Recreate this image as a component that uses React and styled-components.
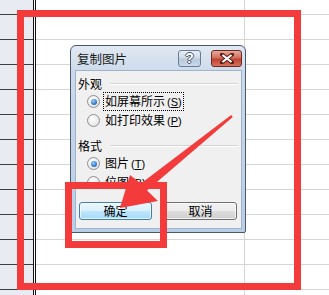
import styled, { createGlobalStyle } from "styled-components";

const GlobalStyle = createGlobalStyle`
  html, body { margin: 0; padding: 0; background: #fff; }
  body { font-family: "Noto Sans CJK SC", "Liberation Sans", sans-serif; }
`;

const Page = styled.div`
  position: relative;
  width: 329px;
  height: 295px;
  overflow: hidden;
  background: #fff;
`;

const Sheet = styled.div`
  display: flex;
  flex-direction: column;
`;

const Row = styled.div`
  display: flex;
  flex: none;
  height: ${(p) => p.$h}px;
`;

const RowHead = styled.div`
  width: 33px;
  box-sizing: border-box;
  background: #e9ebf3;
  border-bottom: 1px solid #3e3e3e;
`;

const Split = styled.div`
  width: 3px;
  box-sizing: border-box;
  border-left: 1px solid #111;
  border-right: 1px solid #111;
  background: #fff;
`;

const Cell = styled.div`
  box-sizing: border-box;
  border-bottom: 1px solid #d6d6d6;
  ${(p) => (p.$w ? `width: ${p.$w}px; border-right: 1px solid #d6d6d6;` : "flex: 1;")}
`;

const Window = styled.div`
  position: absolute;
  left: 70px;
  top: 45px;
  width: 176px;
  height: 188px;
  box-sizing: border-box;
  border: 1px solid #4b5868;
  border-radius: 6px 6px 2px 2px;
  background: linear-gradient(#e1e9f2, #cbdaeb 26px, #b8cee7);
  padding: 0 3px 3px 4px;
  display: flex;
  flex-direction: column;
  font-size: 12px;
  color: #000;
`;

const TitleBar = styled.div`
  height: 24px;
  flex: none;
  display: flex;
  align-items: center;
`;

const Title = styled.div`
  flex: 1;
  padding: 2px 0 0 2px;
  font-size: 12.5px;
  line-height: 16px;
  color: #1a1a1a;
`;

const CapButton = styled.div`
  width: ${(p) => p.$w}px;
  height: 17px;
  box-sizing: border-box;
  margin-left: ${(p) => p.$gap || 0}px;
  border: 1px solid ${(p) => (p.$close ? "#6b2a24" : "#6a7d93")};
  border-radius: 3px;
  background: ${(p) =>
    p.$close
      ? "linear-gradient(#e7a99c, #d0705f 45%, #bf4131 55%, #d8735e)"
      : "linear-gradient(#e8eff7, #cfdbe9 45%, #b8c9dd 55%, #c9d8ea)"};
  display: flex;
  align-items: center;
  justify-content: center;
`;

const HelpGlyph = styled.span`
  font-family: "Liberation Sans", sans-serif;
  font-weight: bold;
  font-size: 14px;
  line-height: 14px;
  color: #fff;
  text-shadow: -1px 0 #4b5a6c, 1px 0 #4b5a6c, 0 -1px #4b5a6c, 0 1px #4b5a6c;
`;

const Body = styled.div`
  flex: 1;
  box-sizing: border-box;
  background: #f0f0f0;
  border: 1px solid #9fb4cc;
  padding: 5px 3px 0 2px;
  display: flex;
  flex-direction: column;
`;

const GroupHead = styled.div`
  display: flex;
  align-items: center;
  height: 16px;
  line-height: 16px;
  margin-top: ${(p) => p.$top || 0}px;
  &::after {
    content: "";
    flex: 1;
    margin: 0 0 0 8px;
    border-top: 1px solid #d5d5d5;
    border-bottom: 1px solid #fff;
  }
`;

const RadioRow = styled.div`
  display: flex;
  align-items: center;
  height: 19px;
  padding-left: 9px;
`;

const RadioDot = styled.span`
  width: 13px;
  height: 13px;
  box-sizing: border-box;
  border-radius: 50%;
  border: 1px solid #8e8f8f;
  background: radial-gradient(circle at 40% 35%, #fff, #dcdcdc);
  display: flex;
  align-items: center;
  justify-content: center;
  &::after {
    content: "";
    display: ${(p) => (p.$on ? "block" : "none")};
    width: 6px;
    height: 6px;
    border-radius: 50%;
    background: radial-gradient(circle at 40% 35%, #8fd0ff, #2a6cbf 70%, #1b4f94);
  }
`;

const Label = styled.span`
  margin-left: 4px;
  padding: 0 1px;
  line-height: 15px;
  outline: ${(p) => (p.$focus ? "1px dotted #000" : "none")};
`;

const Key = styled.span`
  margin-left: 2px;
  font-family: "Liberation Sans", sans-serif;
  font-size: 11px;
`;

const ButtonRow = styled.div`
  display: flex;
  gap: 12px;
  margin-top: 10px;
  padding-left: 1px;
`;

const Button = styled.div`
  width: 73px;
  height: 18px;
  box-sizing: border-box;
  border-radius: 3px;
  border: 1px solid ${(p) => (p.$default ? "#3c7fb1" : "#707070")};
  background: ${(p) =>
    p.$default
      ? "linear-gradient(#eaf6fd, #d9f0fc 50%, #bee6fd 51%, #a7d9f5)"
      : "linear-gradient(#f2f2f2, #ebebeb 50%, #dddddd 51%, #cfcfcf)"};
  box-shadow: inset 0 0 0 1px rgba(255, 255, 255, 0.7);
  display: flex;
  align-items: center;
  justify-content: center;
  line-height: 16px;
`;

const RedBox = styled.div`
  position: absolute;
  left: ${(p) => p.$x}px;
  top: ${(p) => p.$y}px;
  width: ${(p) => p.$w}px;
  height: ${(p) => p.$h}px;
  box-sizing: border-box;
  border: 7px solid #f33b3c;
`;

const Overlay = styled.svg`
  position: absolute;
  left: 0;
  top: 0;
  pointer-events: none;
`;

const rowHeights = [15, 25, 25, 25, 25, 25, 25, 25, 25, 25, 25, 25, 10];

function Radio({ on, focus, text, k }) {
  return (
    <RadioRow>
      <RadioDot $on={on} />
      <Label $focus={focus}>
        {text}
        <Key>
          (<u>{k}</u>)
        </Key>
      </Label>
    </RadioRow>
  );
}

export default function App() {
  return (
    <Page>
      <GlobalStyle />
      <Sheet>
        {rowHeights.map((h, i) => (
          <Row key={i} $h={h}>
            <RowHead />
            <Split />
            <Cell $w={209} />
            <Cell />
          </Row>
        ))}
      </Sheet>

      <Window>
        <TitleBar>
          <Title>复制图片</Title>
          <CapButton $w={23}>
            <HelpGlyph>?</HelpGlyph>
          </CapButton>
          <CapButton $w={31} $gap={10} $close>
            <svg width="14" height="11" viewBox="0 0 14 11">
              <path d="M2 1.5 L12 9.5 M12 1.5 L2 9.5" stroke="#5a1d17" strokeWidth="4" strokeLinecap="square" />
              <path d="M2.5 2 L11.5 9 M11.5 2 L2.5 9" stroke="#fff" strokeWidth="2.2" />
            </svg>
          </CapButton>
        </TitleBar>
        <Body>
          <GroupHead>外观</GroupHead>
          <Radio on focus text="如屏幕所示" k="S" />
          <Radio text="如打印效果" k="P" />
          <GroupHead $top={8}>格式</GroupHead>
          <Radio on text="图片" k="T" />
          <Radio text="位图" k="B" />
          <ButtonRow>
            <Button $default>确定</Button>
            <Button>取消</Button>
          </ButtonRow>
        </Body>
      </Window>

      <RedBox $x={17} $y={10} $w={284} $h={280} />
      <RedBox $x={65} $y={182} $w={102} $h={66} />

      <Overlay width="329" height="295" viewBox="0 0 329 295">
        <polygon
          points="231.2,115 232.8,117 147,190.5 158,201 120,208 130,175 141,183.5"
          fill="#f33b3c"
        />
      </Overlay>
    </Page>
  );
}
